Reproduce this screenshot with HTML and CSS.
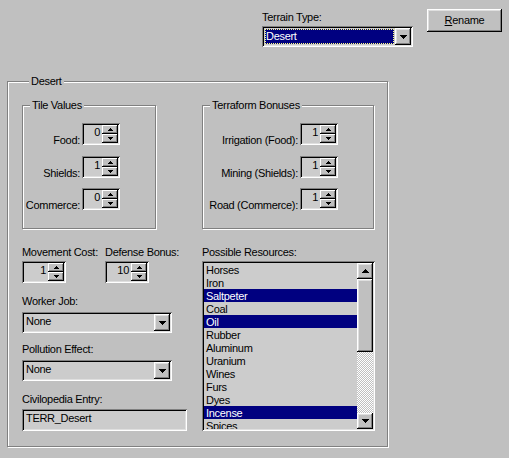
FILE: index.html
```html
<!DOCTYPE html>
<html>
<head>
<meta charset="utf-8">
<link rel="stylesheet" href="styles.css">
</head>
<body>
<div class="top">
  <div class="terrain">
    <div class="lbl">Terrain Type:</div>
    <div class="combo combo-terrain">
      <div class="combo-value">Desert</div>
      <div class="drop-btn"><svg width="7" height="4" viewBox="0 0 7 4"><path d="M0 0h7v1H6v1H5v1H4v1H3V3H2V2H1V1H0z"/></svg></div>
    </div>
  </div>
  <div class="btn rename"><u>R</u>ename</div>
</div>

<div class="group main">
  <div class="group-title">Desert</div>
  <div class="groups-row">
    <div class="group tile">
      <div class="group-title">Tile Values</div>
      <div class="rows">
        <div class="row"><span class="row-lbl">Food:</span>
          <div class="spin"><span class="spin-val">0</span><div class="spin-btns"><div class="sbtn"><svg width="5" height="3" viewBox="0 0 5 3"><path d="M2 0h1v1h1v1h1v1H0V2h1V1h1z"/></svg></div><div class="sbtn"><svg width="5" height="3" viewBox="0 0 5 3"><path d="M0 0h5v1H4v1H3v1H2V2H1V1H0z"/></svg></div></div></div>
        </div>
        <div class="row"><span class="row-lbl">Shields:</span>
          <div class="spin"><span class="spin-val">1</span><div class="spin-btns"><div class="sbtn"><svg width="5" height="3" viewBox="0 0 5 3"><path d="M2 0h1v1h1v1h1v1H0V2h1V1h1z"/></svg></div><div class="sbtn"><svg width="5" height="3" viewBox="0 0 5 3"><path d="M0 0h5v1H4v1H3v1H2V2H1V1H0z"/></svg></div></div></div>
        </div>
        <div class="row"><span class="row-lbl">Commerce:</span>
          <div class="spin"><span class="spin-val">0</span><div class="spin-btns"><div class="sbtn"><svg width="5" height="3" viewBox="0 0 5 3"><path d="M2 0h1v1h1v1h1v1H0V2h1V1h1z"/></svg></div><div class="sbtn"><svg width="5" height="3" viewBox="0 0 5 3"><path d="M0 0h5v1H4v1H3v1H2V2H1V1H0z"/></svg></div></div></div>
        </div>
      </div>
    </div>
    <div class="group terra">
      <div class="group-title">Terraform Bonuses</div>
      <div class="rows">
        <div class="row"><span class="row-lbl">Irrigation (Food):</span>
          <div class="spin"><span class="spin-val">1</span><div class="spin-btns"><div class="sbtn"><svg width="5" height="3" viewBox="0 0 5 3"><path d="M2 0h1v1h1v1h1v1H0V2h1V1h1z"/></svg></div><div class="sbtn"><svg width="5" height="3" viewBox="0 0 5 3"><path d="M0 0h5v1H4v1H3v1H2V2H1V1H0z"/></svg></div></div></div>
        </div>
        <div class="row"><span class="row-lbl">Mining (Shields):</span>
          <div class="spin"><span class="spin-val">1</span><div class="spin-btns"><div class="sbtn"><svg width="5" height="3" viewBox="0 0 5 3"><path d="M2 0h1v1h1v1h1v1H0V2h1V1h1z"/></svg></div><div class="sbtn"><svg width="5" height="3" viewBox="0 0 5 3"><path d="M0 0h5v1H4v1H3v1H2V2H1V1H0z"/></svg></div></div></div>
        </div>
        <div class="row"><span class="row-lbl">Road (Commerce):</span>
          <div class="spin"><span class="spin-val">1</span><div class="spin-btns"><div class="sbtn"><svg width="5" height="3" viewBox="0 0 5 3"><path d="M2 0h1v1h1v1h1v1H0V2h1V1h1z"/></svg></div><div class="sbtn"><svg width="5" height="3" viewBox="0 0 5 3"><path d="M0 0h5v1H4v1H3v1H2V2H1V1H0z"/></svg></div></div></div>
        </div>
      </div>
    </div>
  </div>

  <div class="bottom">
    <div class="col-left">
      <div class="pair">
        <div class="field mv">
          <div class="lbl">Movement Cost:</div>
          <div class="spin wide"><span class="spin-val">1</span><div class="spin-btns"><div class="sbtn"><svg width="5" height="3" viewBox="0 0 5 3"><path d="M2 0h1v1h1v1h1v1H0V2h1V1h1z"/></svg></div><div class="sbtn"><svg width="5" height="3" viewBox="0 0 5 3"><path d="M0 0h5v1H4v1H3v1H2V2H1V1H0z"/></svg></div></div></div>
        </div>
        <div class="field">
          <div class="lbl">Defense Bonus:</div>
          <div class="spin wide"><span class="spin-val">10</span><div class="spin-btns"><div class="sbtn"><svg width="5" height="3" viewBox="0 0 5 3"><path d="M2 0h1v1h1v1h1v1H0V2h1V1h1z"/></svg></div><div class="sbtn"><svg width="5" height="3" viewBox="0 0 5 3"><path d="M0 0h5v1H4v1H3v1H2V2H1V1H0z"/></svg></div></div></div>
        </div>
      </div>
      <div class="lbl worker">Worker Job:</div>
      <div class="combo small">
        <div class="combo-value">None</div>
        <div class="drop-btn"><svg width="7" height="4" viewBox="0 0 7 4"><path d="M0 0h7v1H6v1H5v1H4v1H3V3H2V2H1V1H0z"/></svg></div>
      </div>
      <div class="lbl pollution">Pollution Effect:</div>
      <div class="combo small">
        <div class="combo-value">None</div>
        <div class="drop-btn"><svg width="7" height="4" viewBox="0 0 7 4"><path d="M0 0h7v1H6v1H5v1H4v1H3V3H2V2H1V1H0z"/></svg></div>
      </div>
      <div class="lbl civ">Civilopedia Entry:</div>
      <div class="edit">TERR_Desert</div>
    </div>

    <div class="col-right">
      <div class="lbl">Possible Resources:</div>
      <div class="list">
        <div class="items">
          <div class="item">Horses</div>
          <div class="item">Iron</div>
          <div class="item sel">Saltpeter</div>
          <div class="item">Coal</div>
          <div class="item sel">Oil</div>
          <div class="item">Rubber</div>
          <div class="item">Aluminum</div>
          <div class="item">Uranium</div>
          <div class="item">Wines</div>
          <div class="item">Furs</div>
          <div class="item">Dyes</div>
          <div class="item sel">Incense</div>
          <div class="item">Spices</div>
        </div>
        <div class="vscroll">
          <div class="sb-btn"><svg width="7" height="4" viewBox="0 0 7 4"><path d="M3 0h1v1h1v1h1v1h1v1H0V3h1V2h1V1h1z"/></svg></div>
          <div class="sb-thumb"></div>
          <div class="sb-track"></div>
          <div class="sb-btn"><svg width="7" height="4" viewBox="0 0 7 4"><path d="M0 0h7v1H6v1H5v1H4v1H3V3H2V2H1V1H0z"/></svg></div>
        </div>
      </div>
    </div>
  </div>
</div>
</body>
</html>
```
FILE: styles.css
```css
* { box-sizing: border-box; }
html, body { margin: 0; padding: 0; }
body {
  width: 509px;
  height: 458px;
  overflow: hidden;
  background: #c0c0c0;
  color: #000;
  font-family: "Liberation Sans", Arial, sans-serif;
  font-size: 11px;
  line-height: 13px;
  letter-spacing: -0.3px;
}
svg { display: block; fill: #000; shape-rendering: crispEdges; }

.lbl { height: 13px; margin-bottom: 2px; white-space: nowrap; }

/* top bar */
.top { height: 81px; display: flex; align-items: flex-start; padding: 9px 0 0 262px; }
.terrain { width: 151px; padding-top: 2px; }
.rename {
  width: 75px; height: 23px; margin-left: 14px;
  display: flex; align-items: center; justify-content: center;
}

/* 3D looks */
.btn, .drop-btn, .sb-btn, .sb-thumb {
  background: #c0c0c0;
  box-shadow: inset -1px -1px #000, inset 1px 1px #fff, inset -2px -2px #808080, inset 2px 2px #dfdfdf;
}
.combo, .spin, .edit, .list {
  background: #cccccc;
  padding: 2px;
  box-shadow: inset 1px 1px #808080, inset -1px -1px #fff, inset 2px 2px #000, inset -2px -2px #dfdfdf;
}

/* combo */
.combo { display: flex; height: 21px; }
.combo-value { flex: 1; padding: 1px 0 0 2px; white-space: nowrap; overflow: hidden; }
.combo-terrain .combo-value {
  margin: 1px;
  padding: 0;
  background: #000080;
  color: #fff;
  border: 1px dotted #ffff7f;
  line-height: 13px;
}
.drop-btn { width: 16px; height: 17px; display: flex; align-items: center; justify-content: center; }
.combo.small { width: 150px; }

/* groups */
.group {
  border: 1px solid #808080;
  box-shadow: inset 1px 1px #fff, 1px 1px #fff;
}
.group-title {
  width: fit-content;
  height: 13px;
  margin: -7px 0 0 7px;
  padding: 0 2px;
  background: #c0c0c0;
  white-space: nowrap;
}
.main { margin-left: 7px; width: 381px; height: 366px; padding-left: 14px; }
.groups-row { display: flex; gap: 46px; margin-top: 17px; }
.tile { width: 134px; height: 124px; }
.terra { width: 172px; height: 124px; }
.rows { margin-top: 11px; }
.row { display: flex; align-items: flex-end; gap: 2px; }
.row + .row { margin-top: 11px; }
.row:last-child { margin-top: 10px; }
.row-lbl { text-align: right; margin-bottom: -2px; white-space: nowrap; }
.tile .row-lbl { width: 57px; }
.terra .row-lbl { width: 95px; }

/* spin */
.spin { display: flex; width: 38px; height: 22px; }
.spin.wide { width: 44px; }
.spin-val { flex: 1; text-align: right; padding: 1px 2px 0 0; }
.spin-btns { width: 16px; display: flex; flex-direction: column; }
.sbtn {
  height: 9px;
  display: flex; align-items: center; justify-content: center;
  background: #c0c0c0;
  box-shadow: inset -1px -1px #000, inset 1px 1px #fff, inset -2px -2px #808080;
}

/* bottom */
.bottom { display: flex; gap: 15px; margin-top: 17px; }
.col-left { width: 165px; }
.pair { display: flex; }
.field.mv { width: 83px; }
.lbl.worker { margin-top: 12px; margin-bottom: 4px; }
.lbl.pollution { margin-top: 10px; margin-bottom: 4px; }
.lbl.civ { margin-top: 12px; margin-bottom: 3px; }
.edit { width: 165px; height: 22px; padding: 3px 2px 0 4px; white-space: nowrap; }

/* list */
.col-right { width: 173px; }
.list { display: flex; width: 173px; height: 170px; }
.items { flex: 1; overflow: hidden; }
.item { height: 13px; padding: 1px 0 0 2px; line-height: 13px; white-space: nowrap; }
.item.sel { background: #000080; color: #fff; }
.vscroll { width: 16px; display: flex; flex-direction: column; }
.sb-btn { height: 16px; display: flex; align-items: center; justify-content: center; }
.sb-thumb { height: 73px; }
.sb-track {
  flex: 1;
  background: repeating-conic-gradient(#ffffff 0 25%, #c0c0c0 0 50%) 0 0 / 2px 2px;
}
```
